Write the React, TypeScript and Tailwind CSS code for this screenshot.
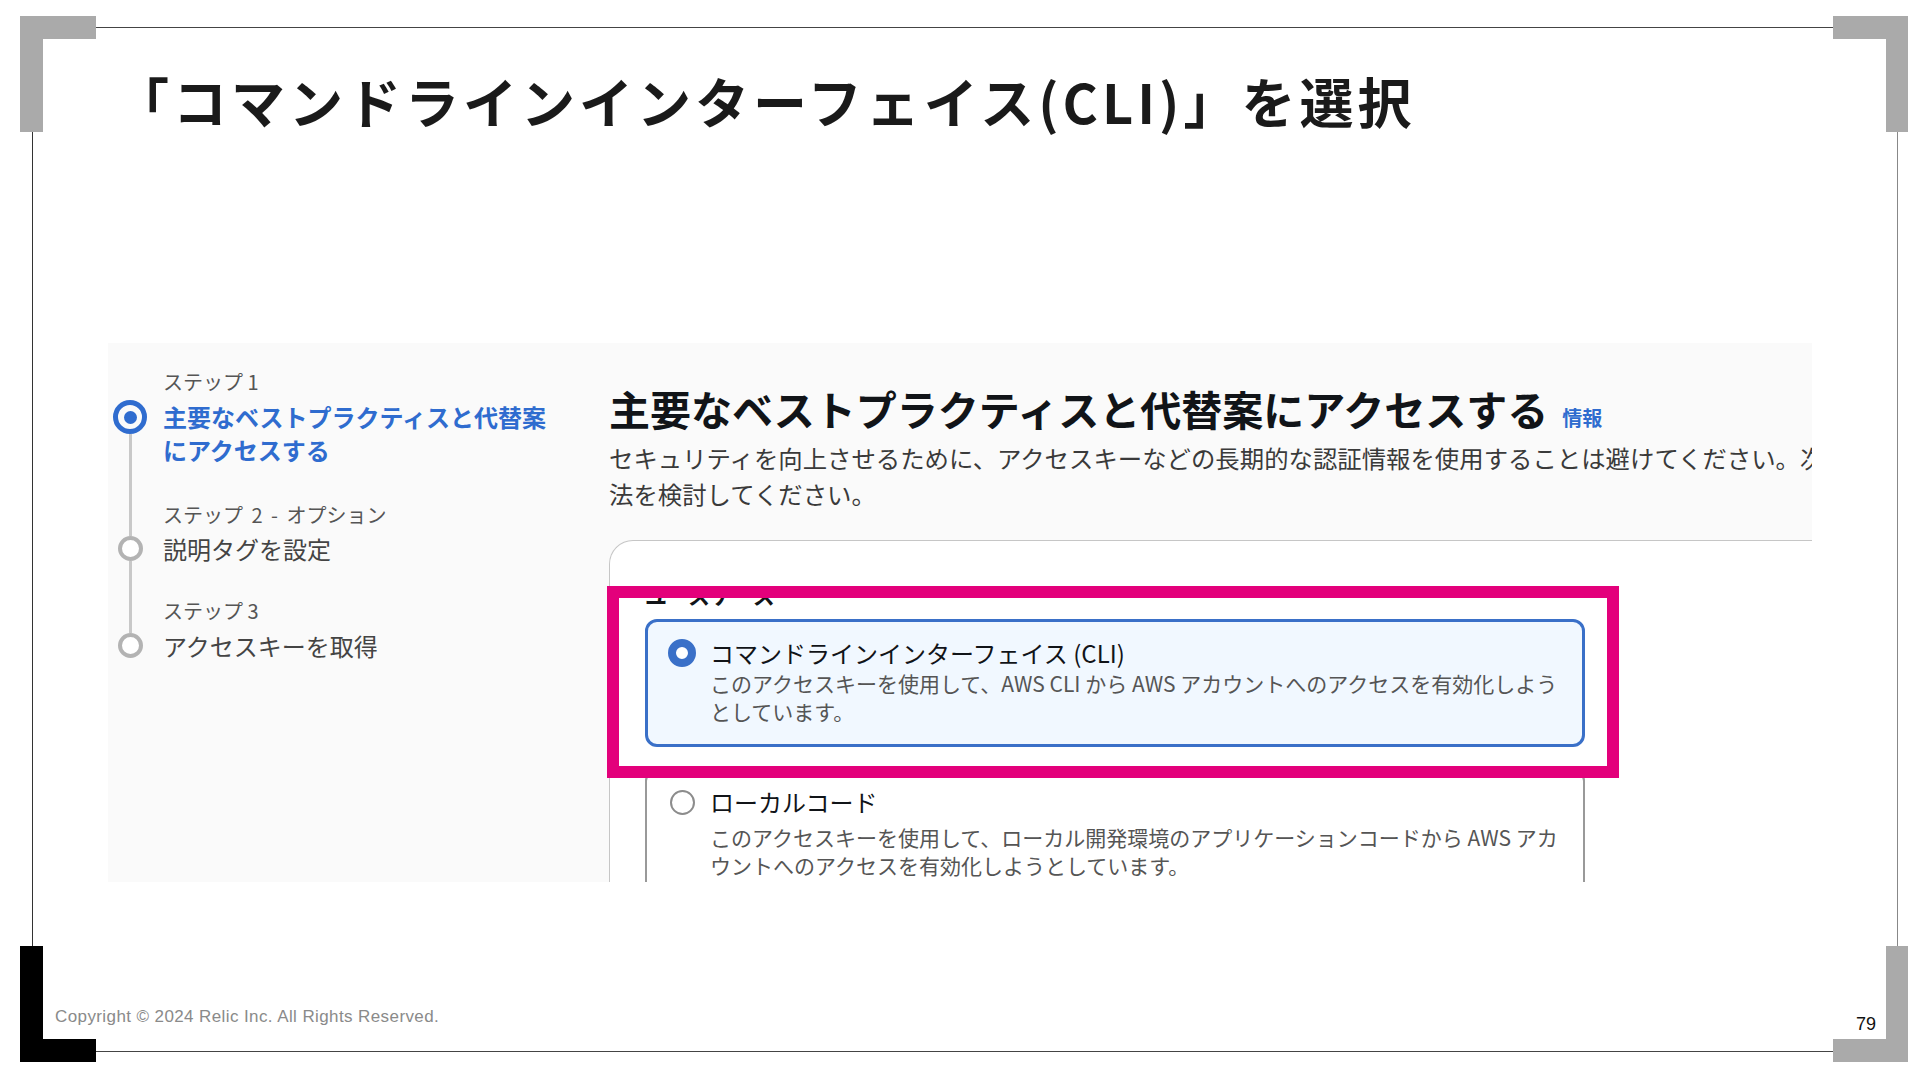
export default function App() {
  const blue = "text-[#2f6ccf]";
  return (
    <div className="relative w-[1920px] h-[1080px] overflow-hidden bg-white font-['Noto_Sans_CJK_JP','Noto_Sans',sans-serif]">
      <div className="ml-[32px] mt-[27px] w-[1866px] h-[1025px] border border-t-[#444] border-b-[#444] border-l-[#333] border-r-[#888] flex flex-col">
        <h1 className="mt-[42px] ml-[82px] h-[62px] leading-[62px] text-[54px] font-bold tracking-[4px] text-[#1a1a1a] whitespace-nowrap">
          「コマンドラインインターフェイス(CLI)」を選択
        </h1>

        {/* embedded console screenshot */}
        <div className="mt-[211px] ml-[75px] w-[1704px] h-[539px] shrink-0 bg-[#fafafa] overflow-hidden flex">
          {/* left nav */}
          <nav className="w-[501px] shrink-0 flex flex-col">
            {/* step 1 */}
            <div className="flex">
              <div className="w-[44px] shrink-0 flex flex-col items-center">
                <div className="h-[57px]" />
                <div className="w-[34px] h-[34px] rounded-full border-[5px] border-[#2f6ccf] flex items-center justify-center">
                  <div className="w-[13px] h-[13px] rounded-full bg-[#2f6ccf]" />
                </div>
                <div className="flex-1 w-[3px] bg-[#c8c8c8]" />
              </div>
              <div className="ml-[11px] pt-[26px]">
                <div className="h-[26px] leading-[26px] text-[20px] text-[#555]">ステップ 1</div>
                <div className={`mt-[5px] text-[24px] leading-[33px] font-bold ${blue}`}>
                  主要なベストプラクティスと代替案
                  <br />
                  にアクセスする
                </div>
              </div>
            </div>
            {/* step 2 */}
            <div className="flex">
              <div className="w-[44px] shrink-0 flex flex-col items-center">
                <div className="h-[70px] w-[3px] bg-[#c8c8c8]" />
                <div className="w-[25px] h-[25px] rounded-full border-[4px] border-[#b3b3b3] bg-white" />
                <div className="flex-1 w-[3px] bg-[#c8c8c8]" />
              </div>
              <div className="ml-[11px] pt-[36px]">
                <div className="h-[26px] leading-[26px] text-[20px] text-[#555] [word-spacing:4px]">ステップ 2 - オプション</div>
                <div className="mt-[4px] text-[24px] leading-[33px] text-[#444]">説明タグを設定</div>
              </div>
            </div>
            {/* step 3 */}
            <div className="flex">
              <div className="w-[44px] shrink-0 flex flex-col items-center">
                <div className="h-[68px] w-[3px] bg-[#c8c8c8]" />
                <div className="w-[25px] h-[25px] rounded-full border-[4px] border-[#b3b3b3] bg-white" />
              </div>
              <div className="ml-[11px] pt-[33px]">
                <div className="h-[26px] leading-[26px] text-[20px] text-[#555]">ステップ 3</div>
                <div className="mt-[5px] text-[24px] leading-[33px] text-[#444]">アクセスキーを取得</div>
              </div>
            </div>
          </nav>

          {/* main */}
          <div className="flex-1 min-w-0 pt-[41px]">
            <h2 className="h-[48px] leading-[48px] text-[41px] font-bold text-[#111418] whitespace-nowrap">
              主要なベストプラクティスと代替案にアクセスする
              <span className={`ml-[14px] text-[20px] font-bold ${blue}`}>情報</span>
            </h2>
            <div className="mt-[8px] text-[24.4px] leading-[36px] text-[#3a3a3a] whitespace-nowrap">
              <div>セキュリティを向上させるために、アクセスキーなどの長期的な認証情報を使用することは避けてください。次の代替方</div>
              <div>法を検討してください。</div>
            </div>

            <div className="relative mt-[28px] w-[1300px] h-[400px] bg-white border-t border-l border-[#c6c6c6] rounded-tl-[24px] pl-[35px] pt-[38px]">
              <div className="h-[30px] leading-[30px] text-[22px] font-bold text-[#111418]">ユースケース</div>

              {/* option 1 (selected) */}
              <div className="mt-[10px] w-[940px] border-[3px] border-[#3a70c8] rounded-[12px] bg-[#f1f8ff] pl-[20px] pt-[15px] pb-[19px] flex">
                <div className="w-[28px] h-[32px] shrink-0 flex items-center justify-center">
                  <div className="w-[28px] h-[28px] rounded-full border-[8px] border-[#3a70c8] bg-white" />
                </div>
                <div className="ml-[14px] whitespace-nowrap">
                  <div className="h-[32px] leading-[32px] text-[24px] text-[#111418]">コマンドラインインターフェイス (CLI)</div>
                  <div className="text-[21px] leading-[28px] text-[#555]">
                    <div>このアクセスキーを使用して、AWS CLI から AWS アカウントへのアクセスを有効化しよう</div>
                    <div>としています。</div>
                  </div>
                </div>
              </div>

              {/* option 2 */}
              <div className="mt-[22px] w-[940px] border-2 border-[#999] rounded-[12px] bg-white pl-[21px] pt-[15px] pb-[20px] flex">
                <div className="w-[28px] h-[32px] shrink-0 flex items-center justify-center">
                  <div className="w-[25px] h-[25px] rounded-full border-2 border-[#8c8c8c] bg-white" />
                </div>
                <div className="ml-[14px] whitespace-nowrap">
                  <div className="h-[32px] leading-[32px] text-[24px] text-[#111418]">ローカルコード</div>
                  <div className="mt-[5px] text-[21px] leading-[28px] text-[#555]">
                    <div>このアクセスキーを使用して、ローカル開発環境のアプリケーションコードから AWS アカ</div>
                    <div>ウントへのアクセスを有効化しようとしています。</div>
                  </div>
                </div>
              </div>

              {/* highlight */}
              <div className="absolute left-[-3px] top-[45px] w-[1012px] h-[192px] border-[12px] border-[#e3007b]" />
            </div>
          </div>
        </div>

        <div className="flex-1" />
        <footer className="h-[44px] shrink-0 flex justify-between items-start pl-[22px] pr-[21px] font-['Liberation_Sans',Arial,sans-serif]">
          <div className="text-[17px] leading-[20px] tracking-[0.4px] text-[#8a8a8a]">Copyright © 2024 Relic Inc. All Rights Reserved.</div>
          <div className="mt-[7px] text-[18px] leading-[20px] text-[#111]">79</div>
        </footer>
      </div>

      {/* corner brackets */}
      <div className="absolute left-[20px] top-[16px] w-[76px] h-[116px] border-t-[23px] border-l-[23px] border-[#aaaaaa]" />
      <div className="absolute left-[1833px] top-[16px] w-[75px] h-[116px] border-t-[23px] border-r-[22px] border-[#aaaaaa]" />
      <div className="absolute left-[20px] top-[946px] w-[76px] h-[116px] border-b-[23px] border-l-[23px] border-black" />
      <div className="absolute left-[1833px] top-[946px] w-[75px] h-[116px] border-b-[23px] border-r-[22px] border-[#aaaaaa]" />
    </div>
  );
}
